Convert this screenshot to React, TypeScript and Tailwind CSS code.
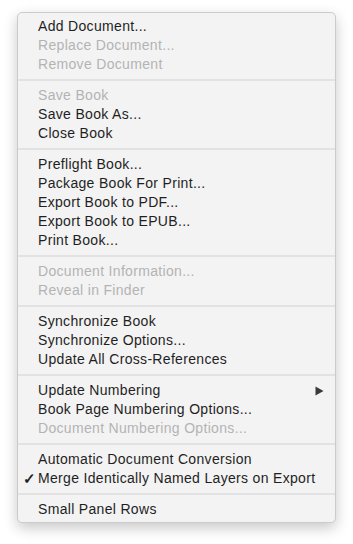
import React from "react";

type Item = { label: string; disabled?: boolean; checked?: boolean; submenu?: boolean };
type Group = Item[];

const groups: Group[] = [
  [
    { label: "Add Document..." },
    { label: "Replace Document...", disabled: true },
    { label: "Remove Document", disabled: true },
  ],
  [
    { label: "Save Book", disabled: true },
    { label: "Save Book As..." },
    { label: "Close Book" },
  ],
  [
    { label: "Preflight Book..." },
    { label: "Package Book For Print..." },
    { label: "Export Book to PDF..." },
    { label: "Export Book to EPUB..." },
    { label: "Print Book..." },
  ],
  [
    { label: "Document Information...", disabled: true },
    { label: "Reveal in Finder", disabled: true },
  ],
  [
    { label: "Synchronize Book" },
    { label: "Synchronize Options..." },
    { label: "Update All Cross-References" },
  ],
  [
    { label: "Update Numbering", submenu: true },
    { label: "Book Page Numbering Options..." },
    { label: "Document Numbering Options...", disabled: true },
  ],
  [
    { label: "Automatic Document Conversion" },
    { label: "Merge Identically Named Layers on Export", checked: true },
  ],
  [{ label: "Small Panel Rows" }],
];

function Row({ item }: { item: Item }) {
  return (
    <div
      className={`relative flex h-[19px] items-center pl-[20px] pr-[12px] text-[14px] leading-[19px] tracking-[0.32px] ${
        item.disabled ? "text-[#b3b3b3]" : "text-[#1f1f1f]"
      }`}
    >
      {item.checked && (
        <span className="absolute left-[5px] top-0 text-[15px] font-bold leading-[19px] text-[#1f1f1f]">✓</span>
      )}
      <span className="flex-1 whitespace-nowrap">{item.label}</span>
      {item.submenu && (
        <svg width="9" height="10" viewBox="0 0 9 10" className="mr-[-1px]">
          <path d="M0.5 0.5 L8.5 5 L0.5 9.5 Z" fill="#3a3a3a" />
        </svg>
      )}
    </div>
  );
}

export default function App() {
  return (
    <div
      className="min-h-[544px] w-[353px] bg-white pt-[12px] pl-[17px]"
      style={{ fontFamily: '"Liberation Sans", Arial, sans-serif' }}
    >
      <div className="w-[319px] rounded-[5px] border border-[#cbcbcb] bg-[#f3f3f3] pt-[4px] pb-[3px] shadow-[0_5px_14px_rgba(0,0,0,0.22)]">
        {groups.map((g, gi) => (
          <div key={gi}>
            {gi > 0 && <div className="my-[5px] h-[2px] bg-[#e2e2e2]" />}
            {g.map((it, ii) => (
              <Row key={ii} item={it} />
            ))}
          </div>
        ))}
      </div>
    </div>
  );
}
